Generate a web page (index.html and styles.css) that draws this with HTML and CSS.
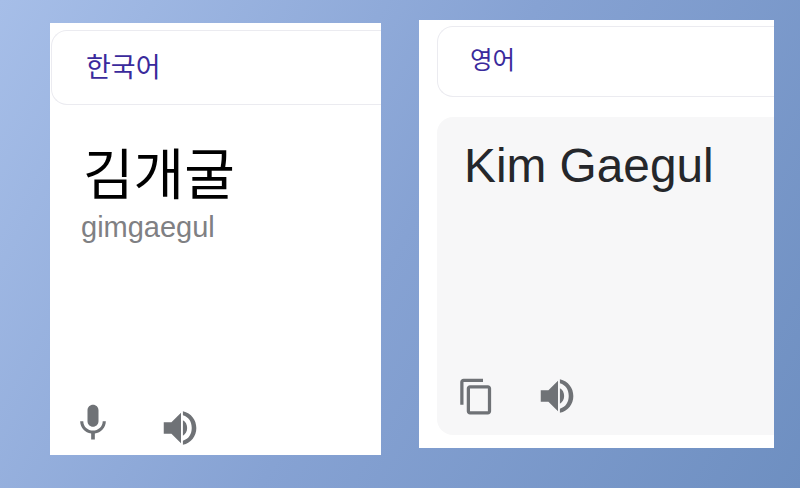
FILE: index.html
```html
<!DOCTYPE html>
<html lang="ko">
<head>
    <meta charset="UTF-8">
    <meta name="viewport" content="width=device-width, initial-scale=1.0">
    <title>번역</title>
    <link rel="stylesheet" href="styles.css">
</head>
<body>
    <div class="stage">
        <!-- Source panel -->
        <section class="panel panel-source">
            <div class="lang-tab"><span class="lang-name">한국어</span></div>
            <div class="source-body">
                <h1 class="source-text">김개굴</h1>
                <p class="romanized">gimgaegul</p>
                <div class="tools">
                    <svg class="icon icon-mic" viewBox="0 0 24 24"><path d="M12 14c1.66 0 3-1.34 3-3V5c0-1.66-1.34-3-3-3S9 3.34 9 5v6c0 1.66 1.34 3 3 3zm5.3-3c0 3-2.54 5.1-5.3 5.1S6.7 14 6.7 11H5c0 3.41 2.72 6.23 6 6.72V21h2v-3.28c3.28-.48 6-3.3 6-6.72h-1.7z"/></svg>
                    <svg class="icon icon-sound" viewBox="0 0 24 24"><path d="M3 9v6h4l5 5V4L7 9H3zM13 8v8c1.4-.7 2.2-2.3 2.2-4s-.8-3.3-2.2-4zM13 3.2v2.2c3.2.9 4.6 3.6 4.6 6.6s-1.4 5.7-4.6 6.6v2.2c4.4-1 7-4.6 7-8.8s-2.6-7.8-7-8.8z"/></svg>
                </div>
            </div>
        </section>

        <!-- Target panel -->
        <section class="panel panel-target">
            <div class="lang-tab"><span class="lang-name">영어</span></div>
            <div class="target-body">
                <h2 class="target-text">Kim Gaegul</h2>
                <div class="tools">
                    <svg class="icon icon-copy" viewBox="0 0 24 24"><path d="M16 1H4c-1.1 0-2 .9-2 2v14h2V3h12V1zm3 4H8c-1.1 0-2 .9-2 2v14c0 1.1.9 2 2 2h11c1.1 0 2-.9 2-2V7c0-1.1-.9-2-2-2zm0 16H8V7h11v14z"/></svg>
                    <svg class="icon icon-sound" viewBox="0 0 24 24"><path d="M3 9v6h4l5 5V4L7 9H3zM13 8v8c1.4-.7 2.2-2.3 2.2-4s-.8-3.3-2.2-4zM13 3.2v2.2c3.2.9 4.6 3.6 4.6 6.6s-1.4 5.7-4.6 6.6v2.2c4.4-1 7-4.6 7-8.8s-2.6-7.8-7-8.8z"/></svg>
                </div>
            </div>
        </section>
    </div>
</body>
</html>
```

FILE: styles.css
```css
html, body {
    height: 100%;
}

body {
    margin: 0;
    overflow: hidden;
    background: linear-gradient(120deg, #a6bee8 0%, #86a2d3 50%, #6e8fc1 100%);
    font-family: "Liberation Sans", "Noto Sans CJK KR", sans-serif;
}

.stage {
    display: flex;
    align-items: flex-start;
    gap: 38px;
    padding-left: 50px;
}

.panel {
    background-color: #fff;
    display: flex;
    flex-direction: column;
    overflow: hidden;
}

.panel-source {
    width: 331px;
    height: 432px;
    margin-top: 23px;
    padding-top: 7px;
    box-sizing: border-box;
}

.panel-target {
    width: 355px;
    height: 428px;
    margin-top: 20px;
    padding: 6px 0 13px 18px;
    box-sizing: border-box;
}

.lang-tab {
    display: flex;
    align-items: center;
    border: 1px solid #ebebf0;
    border-right: none;
    border-radius: 16px 0 0 16px;
    flex-shrink: 0;
}

.panel-source .lang-tab {
    height: 75px;
    margin-left: 1px;
    padding-left: 34px;
    padding-bottom: 4px;
    box-sizing: border-box;
}

.panel-target .lang-tab {
    height: 71px;
    padding-left: 32px;
    padding-bottom: 7px;
    box-sizing: border-box;
}

.lang-name {
    color: #3a2a9c;
    font-family: "Noto Sans CJK KR", sans-serif;
    font-size: 27px;
    font-weight: 400;
}

.panel-target .lang-name {
    font-size: 24.5px;
}

.source-body {
    flex: 1;
    display: flex;
    flex-direction: column;
    padding: 34px 0 0 31px;
}

.source-text {
    margin: 0 0 0 2px;
    color: #000;
    font-family: "Noto Sans CJK KR", sans-serif;
    font-size: 55px;
    font-weight: 400;
    line-height: 62px;
}

.romanized {
    margin: 10px 0 0;
    color: #7f8083;
    font-size: 29px;
    line-height: 32px;
}

.target-body {
    flex: 1;
    display: flex;
    flex-direction: column;
    margin-top: 20px;
    padding: 21px 0 0 27px;
    background-color: #f7f7f8;
    border-radius: 16px 0 0 16px;
}

.target-text {
    margin: 0;
    color: #25272b;
    font-size: 47.8px;
    font-weight: 400;
    line-height: 56px;
}

.tools {
    margin-top: auto;
    display: flex;
}

.icon {
    display: block;
    fill: #6f7276;
    flex-shrink: 0;
}

.panel-source .tools {
    align-items: flex-end;
    gap: 43px;
    margin-left: -10px;
    padding-bottom: 4px;
}

.panel-target .tools {
    align-items: center;
    gap: 39px;
    margin-left: -7px;
    padding-bottom: 16px;
}

.icon-mic {
    width: 44px;
    height: 44px;
    margin-bottom: 6px;
}

.icon-sound {
    width: 46px;
    height: 46px;
}

.icon-copy {
    width: 39px;
    height: 39px;
}
```
